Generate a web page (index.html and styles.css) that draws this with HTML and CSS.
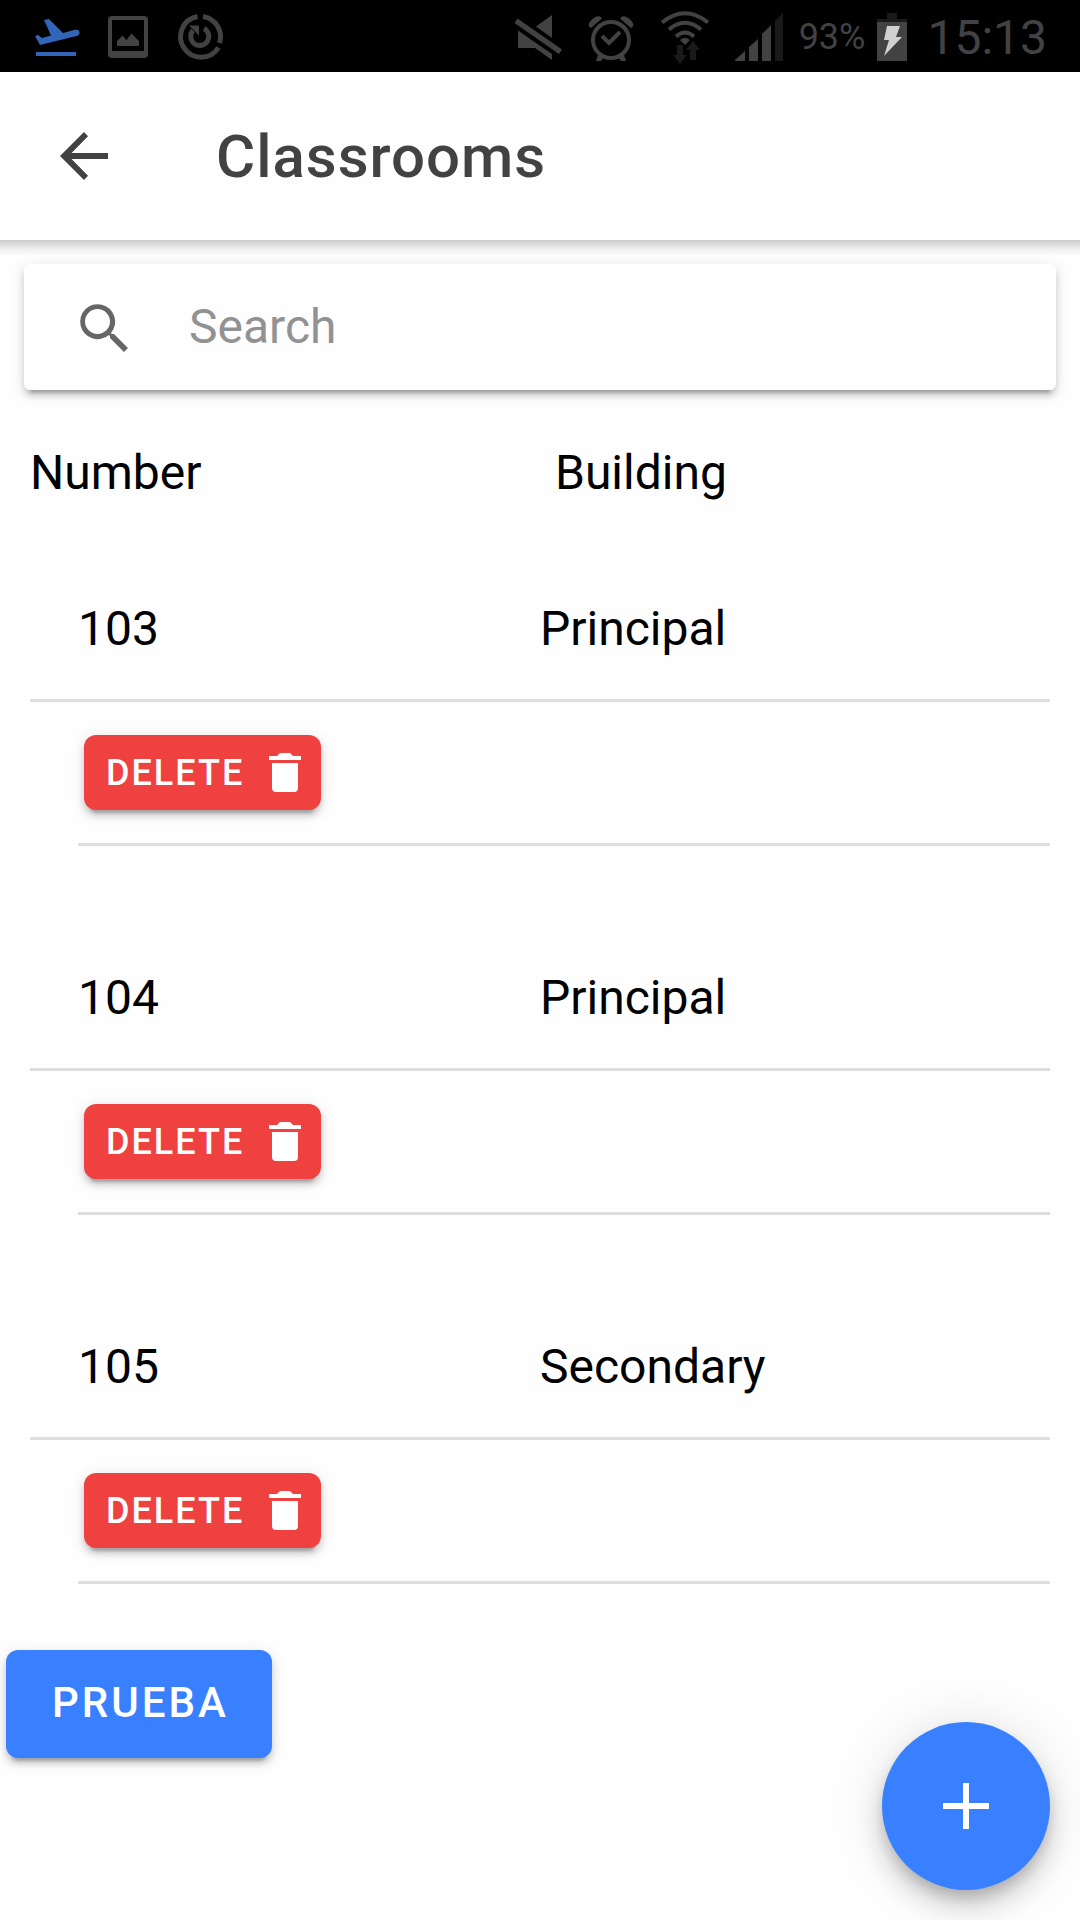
FILE: index.html
```html
<!DOCTYPE html>
<html lang="en">
<head>
  <meta charset="utf-8">
  <meta name="viewport" content="width=device-width, initial-scale=1">
  <title>Classrooms</title>
  <link rel="stylesheet" href="styles.css">
</head>
<body>
  <div class="status-bar">
    <div class="status-group status-left">
      <svg class="status-icon flight" viewBox="0 0 48 48" aria-hidden="true">
        <path d="M4 43h40v4H4zM12 11l5-1 14 14 12-3.200q4-.8 4.500 2.200.4 3-3 4L8 36 3 27l3-1 4 3 9-2.400z"/>
      </svg>
      <svg class="status-icon" viewBox="0 0 48 48" aria-hidden="true">
        <path fill-rule="evenodd" d="M8 7h32q4 0 4 4v34q0 4-4 4H8q-4 0-4-4V11q0-4 4-4zm0 4v31h32V11zM13 37v-5l5.500-5.500 4 4.500 5-6.500 7.500 7.500v5z"/>
      </svg>
      <svg class="status-icon outline" viewBox="0 0 48 48" aria-hidden="true">
        <path d="M21.500 7.500A20.500 20.500 0 1 0 42.500 38.500M27 7.500A20.500 20.500 0 0 1 43.500 34"/>
        <path d="M28 19.500A9 9 0 1 1 17 21.500"/>
        <path class="solid" d="M13 16.500h10v10z"/>
      </svg>
    </div>
    <div class="status-group status-right">
      <svg class="status-icon" viewBox="0 0 48 48" aria-hidden="true">
        <path d="M21 17.500 37 6v23zM3 21.500 37 45v6L20 39H3z"/>
        <path d="M-.5 14 2.500 9.500 47 40.500 44 45z"/>
      </svg>
      <svg class="status-icon" viewBox="0 0 48 48" aria-hidden="true">
        <circle class="outline-part" cx="24" cy="31" r="18"/>
        <path class="outline-part" d="m15 27 7 7 11-11"/>
        <path d="M2 17.500q-1-3 2-6 5-5 9-4l2 2L4 19zM46 17.500q1-3-2-6-5-5-9-4l-2 2L44 19zM11 46l5 3-2 3h-5zM37 46l-5 3 2 3h5z"/>
      </svg>
      <svg class="status-icon wifi" viewBox="0 0 52 56" aria-hidden="true">
        <path class="outline-part" d="M3 13.500Q26-5 49 13.500M10 20.500q16-13.500 32 0M17 27.500q9-8 18 0"/>
        <path d="M21 31q5-4 10 0l-5 5z"/>
        <path class="faint" d="M18 36h6v10h4l-7 9-7-9h4zM31 51h6V41h4l-7-9-7 9h4z"/>
      </svg>
      <svg class="status-icon signal" viewBox="0 0 48 48" aria-hidden="true">
        <path d="M0 48v-1l10-9v10zM14 48V34l9-8v22zM27 48V21l9-9v36z"/>
        <path class="faint" d="M40 48V8l8-8v48z"/>
      </svg>
      <span class="battery-level">93%</span>
      <svg class="battery" viewBox="0 0 30 48" aria-hidden="true">
        <path class="faint" d="M10 0h10v6h10v3H0V6h10z"/>
        <path d="M0 9h30v39H0z"/>
        <path class="bolt" d="M10 13h13l-4 11h6L7 43l5-16H7z"/>
      </svg>
      <span class="clock">15:13</span>
    </div>
  </div>

  <header class="toolbar">
    <button class="back" type="button" aria-label="Back">
      <svg viewBox="0 0 48 48" aria-hidden="true"><path d="M48 21H11.500L28 4.200 24 0 0 24l24 24 4-4.200L11.500 27H48z"/></svg>
    </button>
    <h1 class="title">Classrooms</h1>
  </header>

  <main class="content">
    <div class="search">
      <label class="search-label" for="search" aria-label="Search">
        <svg viewBox="0 0 48 48" aria-hidden="true"><path fill-rule="evenodd" d="M34 30h-2l-1-1a17.500 17.500 0 1 0-2 2l1 1v2l14 14 4-4zM17.500 30a12.500 12.500 0 1 1 0-25 12.500 12.500 0 0 1 0 25z"/></svg>
      </label>
      <input class="search-input" id="search" type="text" placeholder="Search">
    </div>

    <table class="rooms">
      <thead>
        <tr><th scope="col">Number</th><th scope="col">Building</th></tr>
      </thead>
      <tbody>
        <tr class="room"><td>103</td><td>Principal</td></tr>
        <tr><td class="actions" colspan="2"><div class="action-line">
          <button class="button delete" type="button">DELETE <svg viewBox="0 0 32 39" aria-hidden="true"><path d="M0 3h8l3-3h10l3 3h8v4H0zM3 10h26v25q0 4-4 4H7q-4 0-4-4z"/></svg></button>
        </div></td></tr>
      </tbody>
      <tbody>
        <tr class="room"><td>104</td><td>Principal</td></tr>
        <tr><td class="actions" colspan="2"><div class="action-line">
          <button class="button delete" type="button">DELETE <svg viewBox="0 0 32 39" aria-hidden="true"><path d="M0 3h8l3-3h10l3 3h8v4H0zM3 10h26v25q0 4-4 4H7q-4 0-4-4z"/></svg></button>
        </div></td></tr>
      </tbody>
      <tbody>
        <tr class="room"><td>105</td><td>Secondary</td></tr>
        <tr><td class="actions" colspan="2"><div class="action-line">
          <button class="button delete" type="button">DELETE <svg viewBox="0 0 32 39" aria-hidden="true"><path d="M0 3h8l3-3h10l3 3h8v4H0zM3 10h26v25q0 4-4 4H7q-4 0-4-4z"/></svg></button>
        </div></td></tr>
      </tbody>
    </table>

    <button class="button prueba" type="button">PRUEBA</button>
  </main>

  <button class="fab" type="button" aria-label="Add classroom">
    <svg viewBox="0 0 46 46" aria-hidden="true"><path d="M20 0h6v20h20v6H26v20h-6V26H0v-6h20z"/></svg>
  </button>
</body>
</html>
```

FILE: styles.css
```css
* {
  box-sizing: border-box;
}

body {
  margin: 0;
  min-height: 100vh;
  background: #fefefe;
  color: #000;
  font-family: Roboto, "Noto Sans", sans-serif;
  font-size: 48px;
  line-height: 56px;
}

button,
input {
  border: 0;
  font-family: inherit;
}

svg {
  display: block;
  flex: none;
  fill: currentColor;
  overflow: visible;
}

/* Device status bar */
.status-bar {
  display: flex;
  justify-content: space-between;
  height: 72px;
  padding: 2px 33px 0 32px;
  background: #000;
  color: #424242;
}

.status-group {
  display: flex;
  align-items: center;
}

.status-left {
  gap: 24px;
}

.status-right {
  gap: 24px;
}

.status-icon {
  width: 48px;
  height: 48px;
  margin-bottom: 8px;
}

.outline {
  fill: none;
  stroke: currentColor;
  stroke-width: 5px;
}

.outline-part {
  fill: none;
  stroke: currentColor;
  stroke-width: 4px;
}

.solid {
  fill: currentColor;
  stroke: none;
}

.flight {
  color: #3265b8;
}

.wifi {
  width: 52px;
  height: 56px;
  margin-bottom: 0;
}

.signal {
  margin-bottom: 0;
}

.faint {
  fill: #1a1a1a;
}

.battery-level {
  margin-left: -8px;
  font-size: 36px;
}

.battery {
  width: 30px;
  height: 48px;
  margin-left: -12px;
}

.bolt {
  fill: #d0d0d0;
}

.clock {
  margin-left: -4px;
  padding-top: 2px;
  font-size: 48px;
}

/* Page toolbar */
.toolbar {
  position: relative;
  display: flex;
  align-items: center;
  gap: 84px;
  height: 168px;
  padding: 0 36px;
  background: #fefefe;
  color: #424242;
}

.toolbar::after {
  content: "";
  position: absolute;
  top: 100%;
  left: 0;
  right: 0;
  height: 16px;
  background: linear-gradient(rgba(0, 0, 0, 0.2), rgba(0, 0, 0, 0.06) 60%, transparent);
}

.back {
  padding: 24px;
  background: none;
  color: inherit;
}

.back svg {
  width: 48px;
  height: 48px;
}

.title {
  margin: 0;
  padding-top: 2px;
  font-size: 60px;
  font-weight: 500;
  line-height: 72px;
  letter-spacing: 1px;
}

/* Search field */
.content {
  padding-top: 24px;
}

.search {
  display: flex;
  align-items: center;
  gap: 61px;
  height: 126px;
  margin: 0 24px;
  padding: 0 24px 0 56px;
  border-radius: 6px;
  background: #fefefe;
  box-shadow: 0 6px 6px rgba(0, 0, 0, 0.14), 0 9px 3px -6px rgba(0, 0, 0, 0.2), 0 3px 15px rgba(0, 0, 0, 0.12);
}

.search-label {
  padding-top: 2px;
  color: #666;
}

.search-label svg {
  width: 48px;
  height: 48px;
}

.search-input {
  flex: 1;
  min-width: 0;
  padding: 0;
  background: none;
  font-size: 48px;
  line-height: 56px;
}

.search-input::placeholder {
  color: #929292;
}

/* Classroom table */
.rooms {
  width: calc(100% - 60px);
  margin: 0 30px;
  border-spacing: 0;
  table-layout: fixed;
}

.rooms th {
  padding: 55px 0 57px;
  font-weight: 400;
  text-align: left;
}

.rooms th + th {
  padding-left: 15px;
}

.room td {
  padding: 43px 0 42px;
  border-bottom: 3px solid #dedede;
}

.room td:first-child {
  padding-left: 48px;
}

tbody + tbody .room td {
  padding-top: 124px;
}

.rooms .actions {
  padding: 0 0 0 48px;
}

.action-line {
  display: flex;
  align-items: center;
  height: 144px;
  padding: 0 6px;
  border-bottom: 3px solid #dedede;
}

/* Buttons */
.button {
  display: flex;
  align-items: center;
  border-radius: 12px;
  color: #fff;
  font-weight: 500;
  box-shadow: 0 9px 3px -6px rgba(0, 0, 0, 0.2), 0 6px 6px rgba(0, 0, 0, 0.14), 0 3px 15px rgba(0, 0, 0, 0.12);
}

.delete {
  gap: 25px;
  height: 75px;
  padding: 0 20px 0 22px;
  background: #f04141;
  font-size: 36px;
  letter-spacing: 2px;
}

.delete svg {
  width: 32px;
  height: 39px;
}

.prueba {
  height: 108px;
  margin: 66px 6px 54px;
  padding: 0 43px 3px 46px;
  background: #3880ff;
  font-size: 42px;
  letter-spacing: 3px;
}

.fab {
  position: fixed;
  right: 30px;
  bottom: 30px;
  display: grid;
  place-items: center;
  width: 168px;
  height: 168px;
  border-radius: 50%;
  background: #3880ff;
  color: #fff;
  box-shadow: 0 9px 15px -3px rgba(0, 0, 0, 0.2), 0 18px 30px rgba(0, 0, 0, 0.14), 0 3px 54px rgba(0, 0, 0, 0.12);
}

.fab svg {
  width: 46px;
  height: 46px;
}
```
